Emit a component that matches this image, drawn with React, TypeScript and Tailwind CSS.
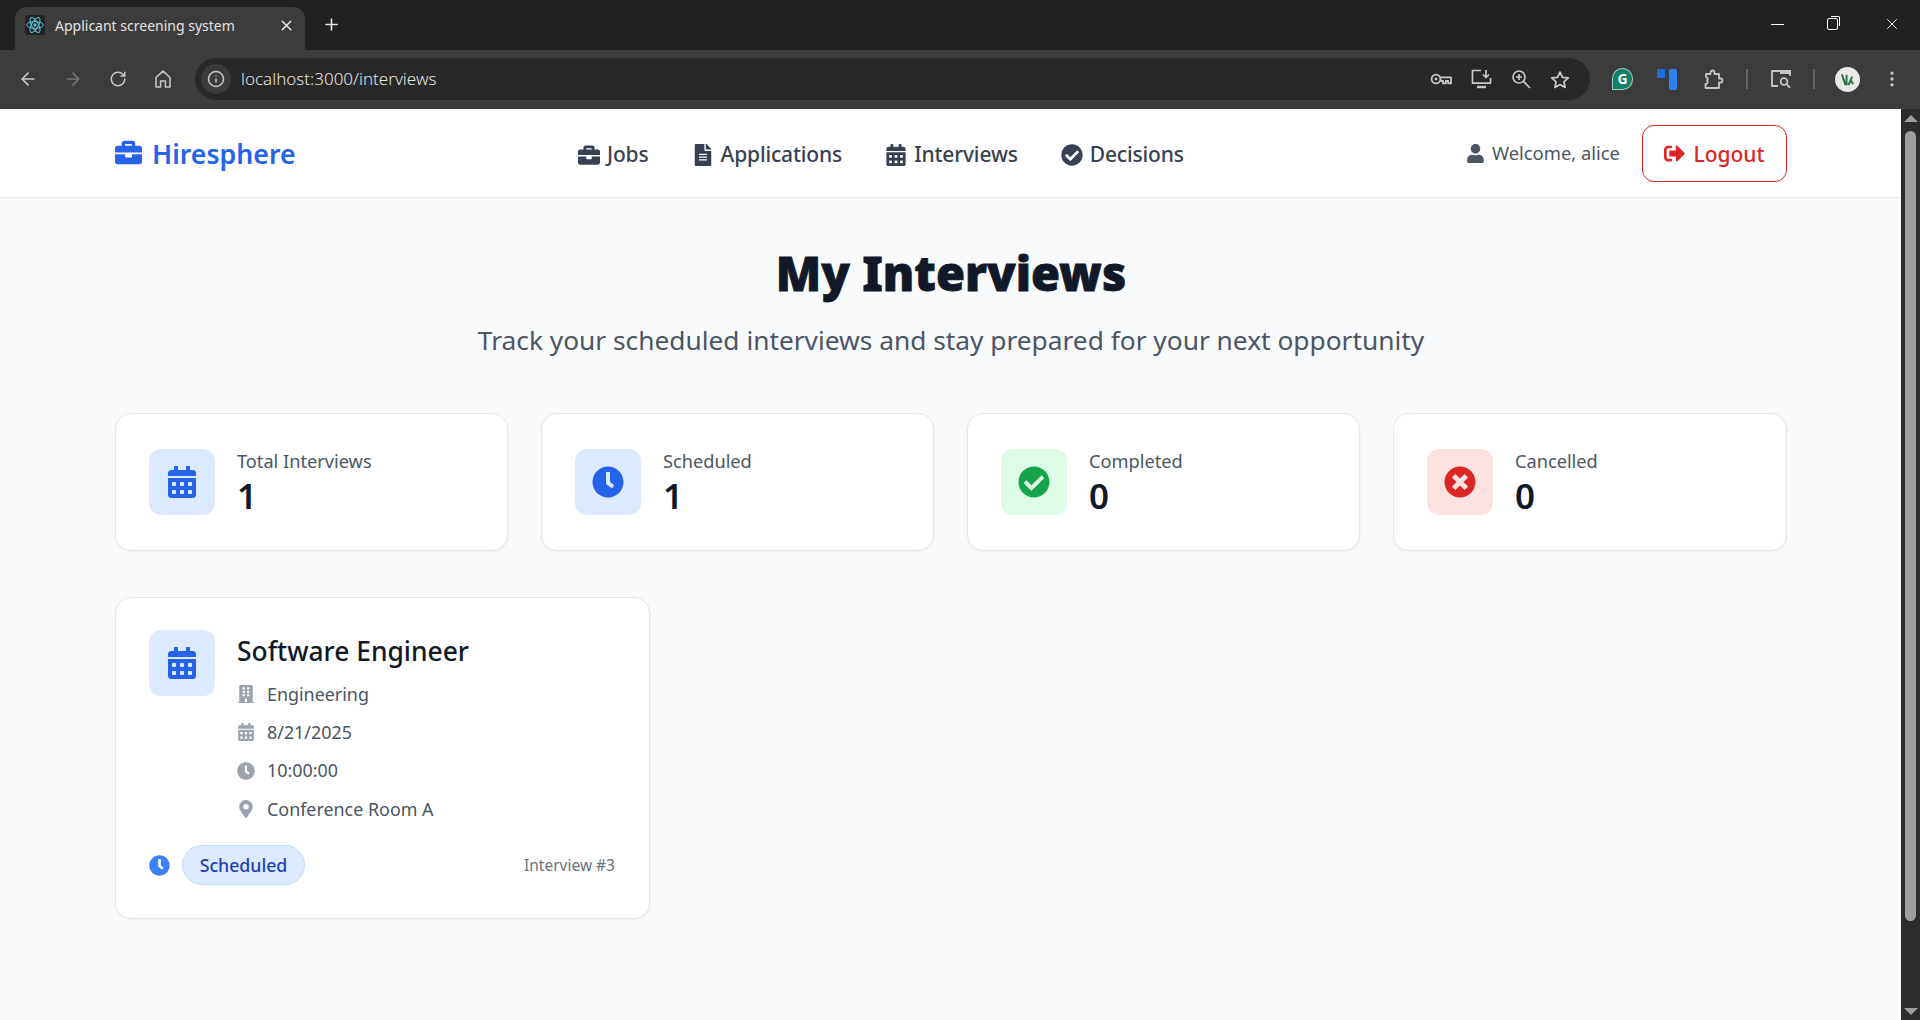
import React from 'react';
import { ArrowLeft, ArrowRight, Info, MoreVertical, Plus, RotateCw, X } from 'lucide-react';
import {
  FaBriefcase,
  FaBuilding,
  FaCalendarAlt,
  FaCheckCircle,
  FaClock,
  FaFileAlt,
  FaMapMarkerAlt,
  FaSignOutAlt,
  FaTimesCircle,
  FaUser,
} from 'react-icons/fa';

const navItems = [
  { label: 'Jobs', icon: FaBriefcase },
  { label: 'Applications', icon: FaFileAlt },
  { label: 'Interviews', icon: FaCalendarAlt },
  { label: 'Decisions', icon: FaCheckCircle },
];

const stats = [
  { label: 'Total Interviews', value: 1, icon: FaCalendarAlt, box: 'bg-[#dbeafe]', color: 'text-[#2563eb]' },
  { label: 'Scheduled', value: 1, icon: FaClock, box: 'bg-[#dbeafe]', color: 'text-[#2563eb]' },
  { label: 'Completed', value: 0, icon: FaCheckCircle, box: 'bg-[#dcfce7]', color: 'text-[#16a34a]' },
  { label: 'Cancelled', value: 0, icon: FaTimesCircle, box: 'bg-[#fee2e2]', color: 'text-[#dc2626]' },
];

const details = [
  { text: 'Engineering', icon: FaBuilding },
  { text: '8/21/2025', icon: FaCalendarAlt },
  { text: '10:00:00', icon: FaClock },
  { text: 'Conference Room A', icon: FaMapMarkerAlt },
];

const ReactLogo = () => (
  <svg viewBox="0 0 24 24" className="w-5 h-5" fill="none" stroke="#58c4dc" strokeWidth="1.2">
    <circle cx="12" cy="12" r="2" fill="#58c4dc" stroke="none" />
    <ellipse cx="12" cy="12" rx="10" ry="4" />
    <ellipse cx="12" cy="12" rx="10" ry="4" transform="rotate(60 12 12)" />
    <ellipse cx="12" cy="12" rx="10" ry="4" transform="rotate(120 12 12)" />
  </svg>
);

// toolbar glyphs that lucide draws differently from Chrome
const HomeGlyph = () => (
  <svg viewBox="0 0 16 18" className="w-[16px] h-[18px]" fill="none" stroke="currentColor" strokeWidth="1.6">
    <path d="M1 7.5 8 1.2l7 6.3V17h-4.6v-6H5.6v6H1z" strokeLinejoin="round" />
  </svg>
);

const KeyGlyph = () => (
  <svg viewBox="0 0 22 14" className="w-[22px] h-[14px]" fill="none" stroke="currentColor" strokeWidth="1.8">
    <circle cx="6" cy="7" r="4.4" />
    <path d="M10.5 5.4H21v6h-2.8V9h-2.4v2.4H13V9h-2.5" strokeLinejoin="round" />
    <circle cx="6" cy="7" r="1.4" fill="currentColor" stroke="none" />
  </svg>
);

const MonitorGlyph = () => (
  <svg viewBox="0 0 21 20" className="w-[21px] h-[20px]" fill="none" stroke="currentColor" strokeWidth="1.7">
    <path d="M10 1.5H1.5v12.6h18V9" strokeLinejoin="round" />
    <path d="M15 1v7M12 5.5 15 8.5 18 5.5" />
    <path d="M6 18h9" strokeWidth="2.4" />
  </svg>
);

const ZoomGlyph = () => (
  <svg viewBox="0 0 20 20" className="w-[20px] h-[20px]" fill="none" stroke="currentColor" strokeWidth="1.7">
    <circle cx="8" cy="8" r="6" />
    <path d="m12.4 12.4 6.6 6.6M8 5v6M5 8h6" />
  </svg>
);

const StarGlyph = () => (
  <svg viewBox="0 0 20 19" className="w-[20px] h-[19px]" fill="none" stroke="currentColor" strokeWidth="1.7">
    <path d="m10 2 2.4 5.3 5.8.6-4.3 3.9 1.2 5.7L10 14.6l-5.1 2.9 1.2-5.7L1.8 7.900l5.8-.6z" strokeLinejoin="round" />
  </svg>
);

const PuzzleGlyph = () => (
  <svg viewBox="0 0 21 21" className="w-[21px] h-[21px]" fill="none" stroke="currentColor" strokeWidth="1.8">
    <path
      d="M3 5h4.500V3.500a2 2 0 0 1 4 0V5H16v4.500h1.500a2 2 0 0 1 0 4H16V19H2.500v-4a2 2 0 0 0 1.500-3.500A2 2 0 0 0 3 8z"
      strokeLinejoin="round"
    />
  </svg>
);

const PanelGlyph = () => (
  <svg viewBox="0 0 22 20" className="w-[22px] h-[20px]" fill="none" stroke="currentColor" strokeWidth="1.8">
    <path d="M8 17H2V2h18v5" strokeLinejoin="round" />
    <path d="M10 1h11v4H10z" fill="currentColor" stroke="none" />
    <circle cx="14" cy="12.500" r="3.400" />
    <path d="m16.500 15 3.500 3.800" />
  </svg>
);

const GrammarlyBadge = () => (
  <div className="relative w-[21px] h-[22px] rounded-full rounded-bl-[3px] bg-[#0f7f68] border border-white/60 flex items-center justify-center text-white text-[14px] font-bold leading-none">
    G
  </div>
);

const AvatarGlyph = () => (
  <div className="w-[25px] h-[25px] rounded-full bg-[#e8ebe6] flex items-center justify-center">
    <svg viewBox="0 0 16 16" className="w-[15px] h-[15px]" fill="none" stroke="#2f6b45" strokeWidth="2">
      <path d="M2 2.500 6 14M7 3v11M13 5l-4 9M11 8l3 5" />
    </svg>
  </div>
);

const BrowserChrome = () => (
  <div className="shrink-0">
    {/* tab strip */}
    <div className="h-[50px] bg-[#202221] flex items-end pl-[15px] text-[#e3e3e3]">
      <div className="w-[290px] h-[43px] bg-[#3c3c3c] rounded-t-[12px] flex items-center pl-[10px] pr-[10px] pb-[7px]">
        <div className="w-5 h-5 bg-[#222] rounded-[3px] flex items-center justify-center">
          <ReactLogo />
        </div>
        <span className="ml-[10px] text-[14px] flex-1 whitespace-nowrap">Applicant screening system</span>
        <X className="w-[17px] h-[17px]" strokeWidth={2.2} />
      </div>
      <div className="h-[50px] flex items-center ml-[17px] pb-[1px]">
        <Plus className="w-[19px] h-[19px]" strokeWidth={2} />
      </div>
      <div className="ml-auto h-[50px] flex items-center pb-[2px] text-white">
        <div className="w-[57px] flex justify-center"><div className="w-[13px] h-px bg-white" /></div>
        <div className="w-[57px] flex justify-center pr-[4px]">
          <div className="relative w-[11px] h-[12px] border border-white rounded-[2px]">
            <div className="absolute -top-[3px] -right-[3px] w-[9px] h-[10px] border-t border-r border-white rounded-tr-[2px]" />
          </div>
        </div>
        <div className="w-[57px] flex justify-center"><X className="w-[18px] h-[18px]" strokeWidth={1.2} /></div>
      </div>
    </div>
    {/* toolbar */}
    <div className="h-[59px] bg-[#3c3c3c] flex items-center pl-[5px] pb-[1px] text-[#c7c7c7]">
      <div className="w-[45px] flex justify-center"><ArrowLeft className="w-[20px] h-[20px]" /></div>
      <div className="w-[45px] flex justify-center"><ArrowRight className="w-[20px] h-[20px] text-[#757575]" /></div>
      <div className="w-[45px] flex justify-center"><RotateCw className="w-[18px] h-[18px]" /></div>
      <div className="w-[45px] flex justify-center"><HomeGlyph /></div>
      <div className="w-[1395px] h-[42px] ml-[10px] rounded-full bg-[#282828] flex items-center pl-[6px] pr-[20px]">
        <div className="w-[30px] h-[30px] rounded-full bg-[#3c3c3c] flex items-center justify-center">
          <Info className="w-[18px] h-[18px]" />
        </div>
        <span className="ml-[10px] text-[17px] text-[#e3e3e3] flex-1 font-light">localhost:3000/interviews</span>
        <div className="flex items-center gap-[19px]">
          <KeyGlyph />
          <MonitorGlyph />
          <ZoomGlyph />
          <StarGlyph />
        </div>
      </div>
      <div className="ml-[22px]"><GrammarlyBadge /></div>
      <div className="ml-[24px] w-[20px] h-[21px] flex justify-between">
        <div className="w-[8px] h-[9px] bg-[#1a6ee0]" />
        <div className="w-[8px] h-[21px] bg-[#2b80f5] rounded-[2px]" />
      </div>
      <div className="ml-[26px]"><PuzzleGlyph /></div>
      <div className="ml-[22px] w-[2px] h-[20px] bg-[#666]" />
      <div className="ml-[22px]"><PanelGlyph /></div>
      <div className="ml-[21px] w-[2px] h-[20px] bg-[#666]" />
      <div className="ml-[20px]"><AvatarGlyph /></div>
      <MoreVertical className="w-[20px] h-[20px] ml-[22px]" />
    </div>
  </div>
);

const Navbar = () => (
  <nav className="h-[89px] shrink-0 bg-white border-b border-[#e5e7eb] pl-[115px] pr-[114px] flex items-center">
    <div className="flex items-center gap-[10px] text-[#2563eb] w-[300px] pt-[3px]">
      <FaBriefcase className="w-[27px] h-[27px] -mt-[3px]" />
      <span className="text-[26.700px] font-semibold">Hiresphere</span>
    </div>
    <div className="flex items-center gap-[43px] ml-[163px] text-[#374151] pt-[3px]">
      {navItems.map(({ label, icon: Icon }) => (
        <a key={label} className="flex items-center gap-[7px] text-[21px] font-medium tracking-[-0.15px]">
          <Icon className="w-[22px] h-[22px]" />
          {label}
        </a>
      ))}
    </div>
    <div className="ml-auto flex items-center">
      <FaUser className="w-[17px] h-[19px] text-[#4b5563]" />
      <span className="ml-[8px] text-[18.400px] text-[#4b5563]">Welcome, alice</span>
      <button className="ml-[22px] w-[145px] h-[57px] rounded-[12px] border border-[#dc2626] text-[#dc2626] flex items-center justify-center gap-[8px] text-[21px] font-medium pt-[3px]">
        <FaSignOutAlt className="w-[21px] h-[21px] -mt-[3px]" />
        Logout
      </button>
    </div>
  </nav>
);

const IconBox = ({ icon: Icon }: { icon: React.ComponentType<{ className?: string }> }) => (
  <Icon className="w-[32px] h-[32px]" />
);

const StatCard = ({ label, value, icon, box, color }: (typeof stats)[number]) => (
  <div className="h-[138px] bg-white rounded-[16px] border border-[#e5e7eb] shadow-[0_1px_3px_rgba(0,0,0,0.05)] px-[33px] flex items-center gap-[22px]">
    <div className={`w-[66px] h-[66px] rounded-[12px] flex items-center justify-center ${box} ${color}`}>
      <IconBox icon={icon} />
    </div>
    <div className="pt-[3px]">
      <p className="text-[18.200px] leading-[26px] text-[#4b5563]">{label}</p>
      <p className="text-[35px] leading-[46px] -mt-[1px] font-semibold text-[#111827]">{value}</p>
    </div>
  </div>
);

const InterviewCard = () => (
  <div className="w-[535px] h-[322px] bg-white rounded-[16px] border border-[#e5e7eb] shadow-[0_1px_3px_rgba(0,0,0,0.05)] pt-[32px] px-[33px]">
    <div className="flex gap-[22px]">
      <div className="w-[66px] h-[66px] rounded-[12px] bg-[#dbeafe] text-[#2563eb] flex items-center justify-center">
        <IconBox icon={FaCalendarAlt} />
      </div>
      <div>
        <h3 className="text-[26.400px] leading-[40px] font-medium text-[#111827] mt-[1px]">Software Engineer</h3>
        <div className="mt-[7px] flex flex-col gap-[6px]">
          {details.map(({ text, icon: Icon }) => (
            <div key={text} className="h-[32.300px] flex items-center gap-[12px] text-[17.900px] text-[#4b5563]">
              <Icon className="w-[18px] h-[18px] text-[#9ca3af]" />
              {text}
            </div>
          ))}
        </div>
      </div>
    </div>
    <div className="mt-[20px] flex items-center">
      <FaClock className="w-[21px] h-[21px] text-[#3b82f6]" />
      <span className="ml-[12px] h-[40px] w-[123px] rounded-full bg-[#dbeafe] border border-[#bfdbfe] text-[#1e40af] text-[17.700px] font-medium flex items-center justify-center">
        Scheduled
      </span>
      <span className="ml-auto mr-[1px] text-[15.500px] text-[#6b7280]">Interview #3</span>
    </div>
  </div>
);

const Scrollbar = () => (
  <div className="w-[19px] shrink-0 bg-[#2c2c2c] flex flex-col items-center pt-[6px] pb-[5px]">
    <div className="w-0 h-0 border-x-[7px] border-x-transparent border-b-[7px] border-b-[#9e9e9e]" />
    <div className="w-[11px] h-[790px] mt-[9px] rounded-full bg-[#9e9e9e]" />
    <div className="mt-auto w-0 h-0 border-x-[7px] border-x-transparent border-t-[7px] border-t-[#9e9e9e]" />
  </div>
);

export default function App() {
  return (
    <div className="h-screen flex flex-col overflow-hidden font-['Noto_Sans',sans-serif]">
      <BrowserChrome />
      <div className="flex-1 flex min-h-0">
        <div className="flex-1 bg-[#f9fafb] flex flex-col min-w-0">
          <Navbar />
          <main className="pl-[115px] pr-[114px] pt-[45px]">
            <h1 className="text-center text-[47px] leading-[60px] font-black text-[#111827] [-webkit-text-stroke:0.8px_#111827]">
              My Interviews
            </h1>
            <p className="mt-[17px] text-center text-[26.300px] leading-[40px] text-[#4b5563]">
              Track your scheduled interviews and stay prepared for your next opportunity
            </p>
            <div className="mt-[53px] grid grid-cols-[393px_393px_393px_394px] gap-[33px]">
              {stats.map((s) => (
                <StatCard key={s.label} {...s} />
              ))}
            </div>
            <div className="mt-[46px]">
              <InterviewCard />
            </div>
          </main>
        </div>
        <Scrollbar />
      </div>
    </div>
  );
}
